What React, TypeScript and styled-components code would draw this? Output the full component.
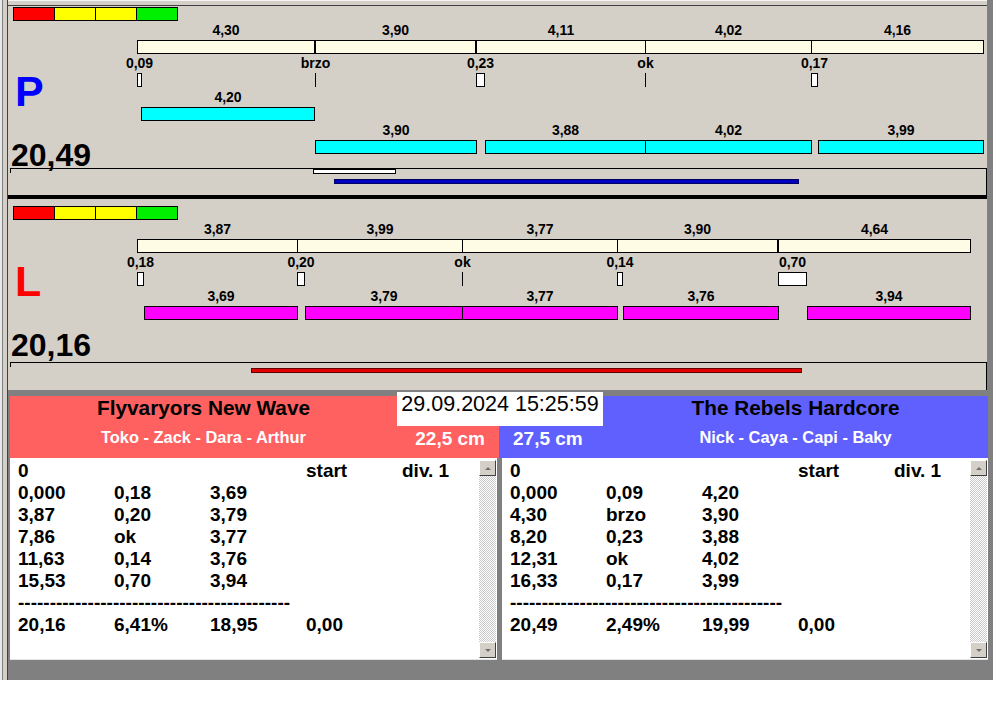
import React from "react";
import styled, { createGlobalStyle } from "styled-components";

const GlobalStyle = createGlobalStyle`
  html, body {
    margin: 0;
    padding: 0;
    background: #ffffff;
  }
  body {
    font-family: "Liberation Sans", Arial, Helvetica, sans-serif;
  }
  * {
    box-sizing: border-box;
  }
`;

// pixels per second on the track
const SCALE = 41.3;
const px = (t: number) => Math.round(t * SCALE);
const fmt = (v: number) => v.toFixed(2).replace(".", ",");

type Leg = {
  split: number;
  reaction: number | string;
  run: number;
  row?: number;
  thickEnd?: boolean;
};

type LaneData = {
  letter: string;
  letterColor: string;
  total: string;
  runFill: string;
  padTop: number;
  bodyHeight: number;
  letterTop: number;
  timelineHeight: number;
  progress: { left: number; top: number; width: number; height: number; fill: string; edge: string }[];
  legs: Leg[];
};

const lanes: LaneData[] = [
  {
    letter: "P",
    letterColor: "#0000ff",
    total: "20,49",
    runFill: "#00ffff",
    padTop: 1,
    bodyHeight: 147,
    letterTop: 49,
    timelineHeight: 27,
    progress: [
      { left: 303, top: 0, width: 83, height: 5, fill: "#ffffff", edge: "#000000" },
      { left: 324, top: 10, width: 465, height: 5, fill: "#0000c0", edge: "#000060" },
    ],
    legs: [
      { split: 4.3, reaction: 0.09, run: 4.2, row: 1, thickEnd: true },
      { split: 3.9, reaction: "brzo", run: 3.9, row: 2, thickEnd: true },
      { split: 4.11, reaction: 0.23, run: 3.88, row: 2 },
      { split: 4.02, reaction: "ok", run: 4.02, row: 2 },
      { split: 4.16, reaction: 0.17, run: 3.99, row: 2 },
    ],
  },
  {
    letter: "L",
    letterColor: "#ff0000",
    total: "20,16",
    runFill: "#ff00ff",
    padTop: 7,
    bodyHeight: 142,
    letterTop: 40,
    timelineHeight: 28,
    progress: [{ left: 241, top: 5, width: 551, height: 5, fill: "#e00000", edge: "#600000" }],
    legs: [
      { split: 3.87, reaction: 0.18, run: 3.69 },
      { split: 3.99, reaction: 0.2, run: 3.79 },
      { split: 3.77, reaction: "ok", run: 3.77 },
      { split: 3.9, reaction: 0.14, run: 3.76, thickEnd: true },
      { split: 4.64, reaction: 0.7, run: 3.94 },
    ],
  },
];

type Team = {
  name: string;
  members: string;
  distance: string;
  color: string;
  side: "left" | "right";
  rows: string[][];
  total: string[];
};

const teams: Team[] = [
  {
    name: "Flyvaryors New Wave",
    members: "Toko - Zack - Dara - Arthur",
    distance: "22,5 cm",
    color: "#ff6060",
    side: "left",
    rows: [
      ["0", "", "", "start", "div. 1"],
      ["0,000", "0,18", "3,69"],
      ["3,87", "0,20", "3,79"],
      ["7,86", "ok", "3,77"],
      ["11,63", "0,14", "3,76"],
      ["15,53", "0,70", "3,94"],
    ],
    total: ["20,16", "6,41%", "18,95", "0,00"],
  },
  {
    name: "The Rebels Hardcore",
    members: "Nick - Caya - Capi - Baky",
    distance: "27,5 cm",
    color: "#6060ff",
    side: "right",
    rows: [
      ["0", "", "", "start", "div. 1"],
      ["0,000", "0,09", "4,20"],
      ["4,30", "brzo", "3,90"],
      ["8,20", "0,23", "3,88"],
      ["12,31", "ok", "4,02"],
      ["16,33", "0,17", "3,99"],
    ],
    total: ["20,49", "2,49%", "19,99", "0,00"],
  },
];

/* ---------- window frame ---------- */

const Window = styled.div`
  display: flex;
  width: 993px;
  height: 680px;
`;

const LeftEdge = styled.div`
  flex: none;
  width: 8px;
  background: linear-gradient(
    to right,
    #e8e8e8 0 2px,
    #808080 2px 3px,
    #d4d0c8 3px 7px,
    #404040 7px 8px
  );
`;

const Main = styled.div`
  flex: 1;
  display: flex;
  flex-direction: column;
  background: #808080;
`;

const TopEdge = styled.div`
  width: 979px;
  height: 6px;
  background: #d4d0c8;
  border-top: 1px solid #f4f4f4;
  border-bottom: 1px solid #404040;
`;

/* ---------- lane chart ---------- */

const Panel = styled.div<{ $padTop: number }>`
  width: 979px;
  padding-top: ${(p) => p.$padTop}px;
  background: #d4d0c8;
  display: flex;
  flex-direction: column;
`;

const Separator = styled.div`
  width: 979px;
  height: 4px;
  background: #000000;
`;

const Scale = styled.div`
  display: flex;
  margin-left: 5px;
  height: 14px;
`;

const ScaleCell = styled.div<{ $fill: string }>`
  width: 42px;
  height: 14px;
  background: ${(p) => p.$fill};
  border: 1px solid #000000;
  & + & {
    margin-left: -1px;
  }
`;

const Body = styled.div<{ $height: number }>`
  display: flex;
  height: ${(p) => p.$height}px;
`;

const Side = styled.div`
  flex: none;
  width: 129px;
  display: flex;
  flex-direction: column;
`;

const Letter = styled.div<{ $color: string; $top: number }>`
  margin: ${(p) => p.$top}px 0 0 7px;
  font-size: 43px;
  line-height: 43px;
  font-weight: bold;
  color: ${(p) => p.$color};
`;

const Total = styled.div`
  margin: 28px 0 0 3px;
  font-size: 32px;
  line-height: 28px;
  font-weight: bold;
  color: #000000;
  white-space: nowrap;
`;

const Track = styled.div`
  position: relative;
  flex: 1;
`;

const Column = styled.div`
  position: absolute;
  display: flex;
  flex-direction: column;
  align-items: center;
`;

const Value = styled.div`
  height: 16px;
  margin-bottom: 2px;
  font-size: 14px;
  line-height: 16px;
  font-weight: bold;
  color: #000000;
  white-space: nowrap;
`;

const Bar = styled.div<{ $fill: string }>`
  align-self: stretch;
  height: 14px;
  background: ${(p) => p.$fill};
  border: 1px solid #000000;
`;

const Tick = styled.div`
  width: 1px;
  height: 14px;
  background: #000000;
`;

const Timeline = styled.div<{ $height: number }>`
  position: relative;
  width: 977px;
  height: ${(p) => p.$height}px;
  margin-left: 2px;
  border-top: 1px solid #000000;
  border-right: 1px solid #000000;
  &::before {
    content: "";
    position: absolute;
    left: 0;
    top: 0;
    width: 1px;
    height: 4px;
    background: #000000;
  }
`;

const Progress = styled.div<{ $fill: string; $edge: string }>`
  position: absolute;
  background: ${(p) => p.$fill};
  border: 1px solid ${(p) => p.$edge};
`;

const SEGMENT_FILL = "#fffce6";
const MARKER_FILL = "#ffffff";

function Lane({ lane }: { lane: LaneData }) {
  let t = 0;
  const columns: React.ReactNode[] = [];

  lane.legs.forEach((leg, i) => {
    const start = t;
    const end = t + leg.split;
    t = end;

    const left = px(start);
    const segWidth = px(end) - left + (leg.thickEnd ? 0 : 1);
    columns.push(
      <Column key={`s${i}`} style={{ left, top: 1, width: segWidth }}>
        <Value>{fmt(leg.split)}</Value>
        <Bar $fill={SEGMENT_FILL} />
      </Column>
    );

    if (typeof leg.reaction === "number") {
      const w = Math.max(5, Math.round(leg.reaction * SCALE));
      columns.push(
        <Column key={`m${i}`} style={{ left, top: 34, width: w }}>
          <Value>{fmt(leg.reaction)}</Value>
          <Bar $fill={MARKER_FILL} />
        </Column>
      );
    } else {
      columns.push(
        <Column key={`m${i}`} style={{ left, top: 34, width: 1 }}>
          <Value>{leg.reaction}</Value>
          <Tick />
        </Column>
      );
    }

    const runStart = start + (typeof leg.reaction === "number" ? leg.reaction : 0);
    const runLeft = px(runStart);
    const runWidth = px(runStart + leg.run) - runLeft + 1;
    const row = leg.row ?? 1;
    columns.push(
      <Column key={`r${i}`} style={{ left: runLeft, top: 68 + (row - 1) * 33, width: runWidth }}>
        <Value>{fmt(leg.run)}</Value>
        <Bar $fill={lane.runFill} />
      </Column>
    );
  });

  return (
    <Panel $padTop={lane.padTop}>
      <Scale>
        <ScaleCell $fill="#ff0000" />
        <ScaleCell $fill="#ffff00" />
        <ScaleCell $fill="#ffff00" />
        <ScaleCell $fill="#00f000" />
      </Scale>
      <Body $height={lane.bodyHeight}>
        <Side>
          <Letter $color={lane.letterColor} $top={lane.letterTop}>
            {lane.letter}
          </Letter>
          <Total>{lane.total}</Total>
        </Side>
        <Track>{columns}</Track>
      </Body>
      <Timeline $height={lane.timelineHeight}>
        {lane.progress.map((b, i) => (
          <Progress
            key={i}
            $fill={b.fill}
            $edge={b.edge}
            style={{ left: b.left, top: b.top, width: b.width, height: b.height }}
          />
        ))}
      </Timeline>
    </Panel>
  );
}

/* ---------- team results ---------- */

const Lower = styled.div`
  position: relative;
  flex: 1;
  display: grid;
  grid-template-columns: 489px 489px;
  padding: 6px 5px 20px 2px;
`;

const Stamp = styled.div`
  position: absolute;
  left: 389px;
  top: 2px;
  width: 206px;
  height: 34px;
  background: #ffffff;
  color: #000000;
  font-size: 21.5px;
  line-height: 24px;
  text-align: center;
  white-space: nowrap;
`;

const TeamBox = styled.div`
  display: flex;
  flex-direction: column;
`;

const Header = styled.div<{ $fill: string; $side: "left" | "right" }>`
  height: 62px;
  background: ${(p) => p.$fill};
  display: grid;
  grid-template-columns: ${(p) => (p.$side === "left" ? "387px 102px" : "104px 385px")};
  grid-template-rows: 24px 1fr;
`;

const TeamName = styled.div<{ $col: number }>`
  grid-row: 1;
  grid-column: ${(p) => p.$col};
  font-size: 20.8px;
  line-height: 24px;
  font-weight: bold;
  color: #000000;
  text-align: center;
  white-space: nowrap;
`;

const Members = styled.div<{ $col: number }>`
  grid-row: 2;
  grid-column: ${(p) => p.$col};
  padding-top: 7px;
  font-size: 16.4px;
  line-height: 20px;
  font-weight: bold;
  color: #ffffff;
  text-align: center;
  white-space: nowrap;
`;

const Distance = styled.div<{ $col: number; $align: "left" | "right" }>`
  grid-row: 2;
  grid-column: ${(p) => p.$col};
  padding: 7px 14px 0;
  font-size: 19px;
  line-height: 24px;
  font-weight: bold;
  color: #ffffff;
  text-align: ${(p) => p.$align};
  white-space: nowrap;
`;

const List = styled.div<{ $side: "left" | "right" }>`
  display: flex;
  height: 202px;
  margin: ${(p) => (p.$side === "left" ? "0 2px 0 0" : "0 0 0 3px")};
  background: #ffffff;
  border-bottom: 1px solid #e4e4e4;
`;

const Rows = styled.div`
  flex: 1;
  min-width: 0;
  overflow: hidden;
  display: grid;
  grid-template-columns: repeat(5, 96px);
  grid-auto-rows: 22px;
  align-content: start;
  padding: 2px 0 0 8px;
  font-size: 19px;
  line-height: 22px;
  font-weight: bold;
  color: #000000;
  white-space: nowrap;
`;

const Dashes = styled.div`
  grid-column: 1 / -1;
  overflow: hidden;
`;

const Scrollbar = styled.div`
  flex: none;
  width: 17px;
  margin: 2px 1px 1px 0;
  display: flex;
  flex-direction: column;
`;

const ScrollButton = styled.div`
  height: 16px;
  background: #d4d0c8;
  border: 1px solid;
  border-color: #ffffff #404040 #404040 #ffffff;
  display: flex;
  align-items: center;
  justify-content: center;
`;

const Arrow = styled.div<{ $dir: "up" | "down" }>`
  width: 0;
  height: 0;
  border-left: 3px solid transparent;
  border-right: 3px solid transparent;
  ${(p) =>
    p.$dir === "up" ? "border-bottom: 3px solid #707070;" : "border-top: 3px solid #707070;"}
`;

const ScrollTrack = styled.div`
  flex: 1;
  background: repeating-conic-gradient(#c8c8c8 0 25%, #ffffff 0 50%) 0 0 / 2px 2px;
`;

function TeamPanel({ team }: { team: Team }) {
  const left = team.side === "left";
  return (
    <TeamBox>
      <Header $fill={team.color} $side={team.side}>
        <TeamName $col={left ? 1 : 2}>{team.name}</TeamName>
        <Members $col={left ? 1 : 2}>{team.members}</Members>
        <Distance $col={left ? 2 : 1} $align={left ? "right" : "left"}>
          {team.distance}
        </Distance>
      </Header>
      <List $side={team.side}>
        <Rows>
          {team.rows.map((row, r) =>
            [0, 1, 2, 3, 4].map((c) => <div key={`${r}-${c}`}>{row[c] ?? ""}</div>)
          )}
          <Dashes>{"-".repeat(43)}</Dashes>
          {team.total.map((v, c) => (
            <div key={`t${c}`}>{v}</div>
          ))}
        </Rows>
        <Scrollbar>
          <ScrollButton>
            <Arrow $dir="up" />
          </ScrollButton>
          <ScrollTrack />
          <ScrollButton>
            <Arrow $dir="down" />
          </ScrollButton>
        </Scrollbar>
      </List>
    </TeamBox>
  );
}

export default function App() {
  return (
    <>
      <GlobalStyle />
      <Window>
        <LeftEdge />
        <Main>
          <TopEdge />
          <Lane lane={lanes[0]} />
          <Separator />
          <Lane lane={lanes[1]} />
          <Lower>
            {teams.map((team) => (
              <TeamPanel key={team.name} team={team} />
            ))}
            <Stamp>29.09.2024 15:25:59</Stamp>
          </Lower>
        </Main>
      </Window>
    </>
  );
}
